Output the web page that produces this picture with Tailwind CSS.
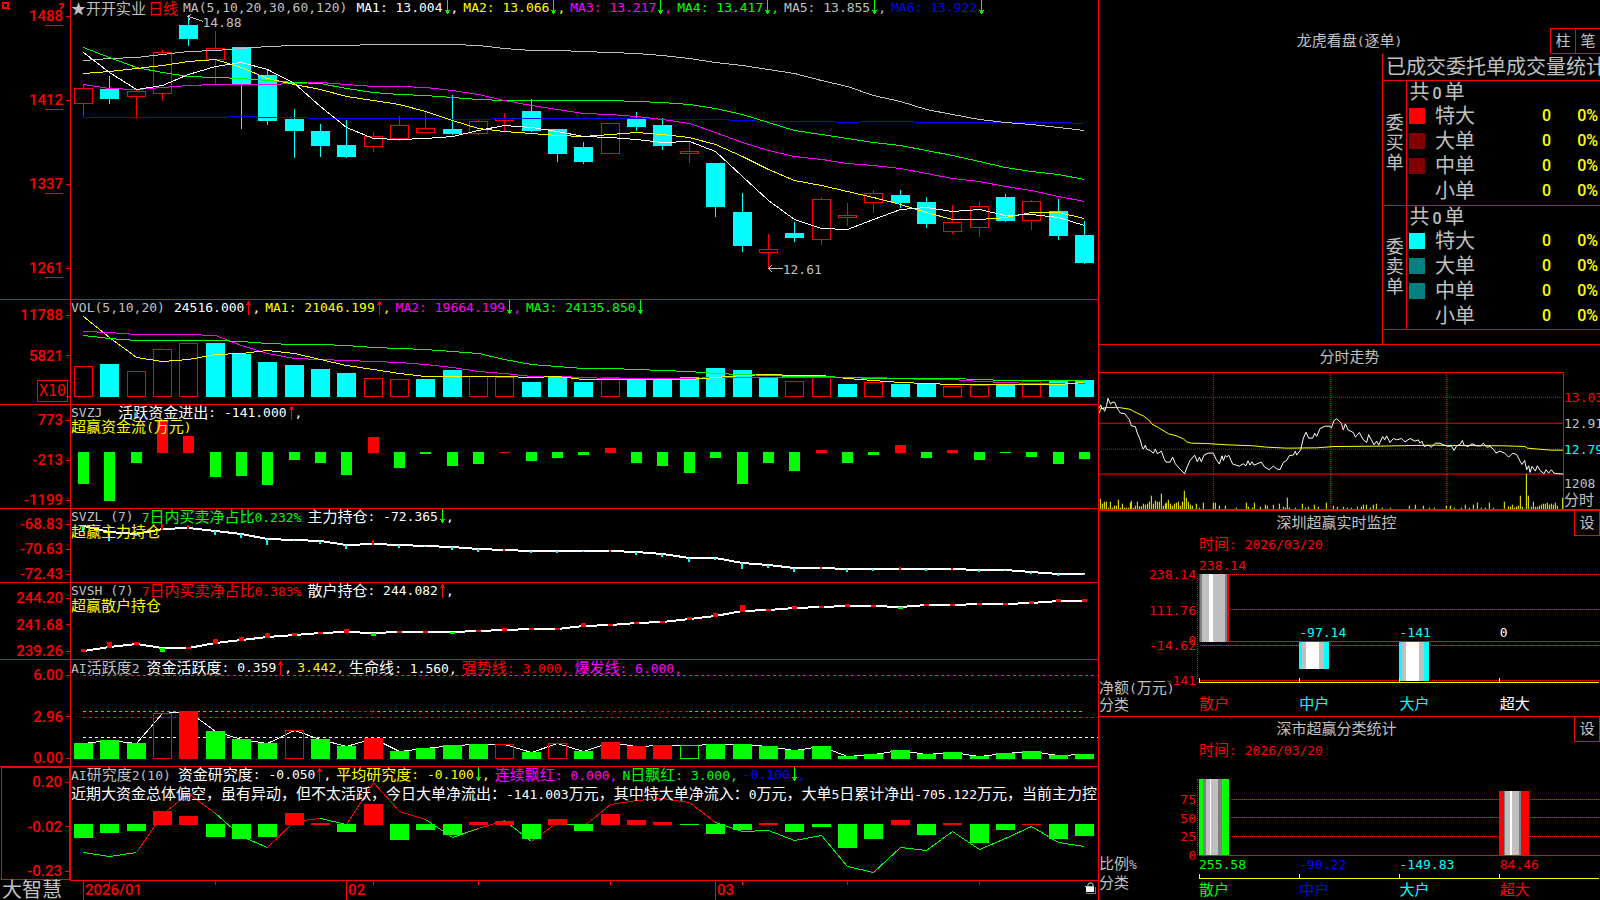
<!DOCTYPE html>
<html lang="zh-CN">
<head>
    <meta charset="UTF-8">
    <meta name="viewport" content="width=device-width, initial-scale=1.0">
    <title>大智慧 - 开开实业 日线</title>
    <script src="https://cdn.jsdelivr.net/npm/@tailwindcss/browser@4"></script>
    <style>
        svg.chart * { shape-rendering: crispEdges; vector-effect: non-scaling-stroke; }
    </style>
</head>
<body class="bg-black text-[#c0c0c0] text-[13px] leading-4 font-['DejaVu_Sans_Mono','Noto_Sans_CJK_SC',monospace]">

<!-- 箭头图标 -->
<svg class="hidden">
    <symbol id="down" viewBox="0 0 8 15"><path d="M4.5 0V14M2 10.5h1.5v1.5h2v-1.500h1.500" fill="none" stroke="#00ff00"/><path d="M3 11h3v2H3z" fill="#00ff00"/></symbol>
    <symbol id="up" viewBox="0 0 8 15"><path d="M4.500 1V15M2 4.500h1.500V3h2v1.500h1.500" fill="none" stroke="#ff0000"/><path d="M3 2h3v2H3z" fill="#ff0000"/></symbol>
</svg>

<main class="flex h-screen overflow-hidden whitespace-nowrap">

    <!-- 左侧：K线与指标 -->
    <div class="grid min-w-0 flex-1 grid-rows-[300fr_105fr_104fr_74fr_77fr_107fr_114fr_19fr]">

        <!-- K线 -->
        <section class="flex min-h-0 border-b border-[#ff0000]">
            <div class="relative w-[71px] shrink-0 border-r border-[#ff0000]">
                <svg class="absolute left-[2px] top-[2px] h-2 w-2" viewBox="0 0 8 8"><path d="M1 1h5v5H1zM6 6l2 2" fill="none" stroke="#ff0000" stroke-width="2"/></svg>
                <span class="absolute right-[5px] top-0 font-bold text-[#ff0000]">?</span>
                <ul class="flex h-full flex-col justify-between pb-[23px] pt-2 text-[#ff0000] font-['Roboto'] text-[15px] font-medium" data-axis="1488,1412,1337,1261" data-underline="1"></ul>
            </div>
            <div class="relative min-w-0 flex-1 overflow-hidden">
                <svg id="kline" class="chart absolute inset-0 h-full w-full" viewBox="71 0 1027 299" preserveAspectRatio="none"></svg>
                <div class="relative flex gap-[5px]">
                    <span class="text-[15px] font-['Noto_Sans_CJK_SC',sans-serif]">★开开实业<span class="ml-[2px] text-[#ff0000]">日线</span></span>
                    <span class="mr-1">MA(5,10,20,30,60,120)</span>
                    <span class="flex text-white">MA1: 13.004<svg class="h-[15px] w-2"><use href="#down"/></svg>,</span>
                    <span class="flex text-[#ffff00]">MA2: 13.066<svg class="h-[15px] w-2"><use href="#down"/></svg>,</span>
                    <span class="flex text-[#ff00ff]">MA3: 13.217<svg class="h-[15px] w-2"><use href="#down"/></svg>,</span>
                    <span class="flex text-[#00ff00]">MA4: 13.417<svg class="h-[15px] w-2"><use href="#down"/></svg>,</span>
                    <span class="flex">MA5: 13.855<svg class="h-[15px] w-2"><use href="#down"/></svg>,</span>
                    <span class="flex text-[#0000ff]">MA6: 13.922<svg class="h-[15px] w-2"><use href="#down"/></svg></span>
                </div>
                <span class="absolute left-[12.8%] top-[5%]">14.88</span>
                <span class="absolute left-[69.3%] top-[87.5%]">12.61</span>
            </div>
        </section>

        <!-- 成交量 -->
        <section class="flex min-h-0 border-b border-[#ff0000]">
            <div class="relative w-[71px] shrink-0 border-r border-[#ff0000]">
                <ul class="flex h-full flex-col justify-between pt-[7px] text-[#ff0000] font-['Roboto'] text-[15px] font-medium" data-axis="11788,5821,"></ul>
                <span class="absolute bottom-[2px] right-[2px] h-[22px] w-[31px] border border-[#ff0000] text-center text-[15px] leading-5 text-[#ff0000]">X10</span>
            </div>
            <div class="relative min-w-0 flex-1 overflow-hidden">
                <svg id="vol" class="chart absolute inset-0 h-full w-full" viewBox="71 300 1027 104" preserveAspectRatio="none"></svg>
                <div class="relative flex gap-[5px]">
                    <span class="mr-1">VOL(5,10,20)</span>
                    <span class="flex text-white">24516.000<svg class="h-[15px] w-2"><use href="#up"/></svg>,</span>
                    <span class="flex text-[#ffff00]">MA1: 21046.199<svg class="h-[15px] w-2"><use href="#up"/></svg>,</span>
                    <span class="flex text-[#ff00ff]">MA2: 19664.199<svg class="h-[15px] w-2"><use href="#down"/></svg>,</span>
                    <span class="flex text-[#00ff00]">MA3: 24135.850<svg class="h-[15px] w-2"><use href="#down"/></svg></span>
                </div>
            </div>
        </section>

        <!-- 资金流 -->
        <section class="flex min-h-0 border-b border-[#ff0000]">
            <ul class="flex w-[71px] shrink-0 flex-col justify-between border-r border-[#ff0000] pt-[7px] text-[#ff0000] font-['Roboto'] text-[15px] font-medium" data-axis="773,-213,-1199"></ul>
            <div class="relative min-w-0 flex-1 overflow-hidden">
                <svg id="svzj" class="chart absolute inset-0 h-full w-full" viewBox="71 405 1027 103" preserveAspectRatio="none"></svg>
                <div class="relative flex gap-4">
                    <span>SVZJ</span>
                    <span class="flex text-white"><span class="text-[15px]">活跃资金进出</span>: -141.000<svg class="h-[15px] w-2"><use href="#up"/></svg>,</span>
                </div>
                <p class="relative text-[15px] leading-3 text-[#ffff00]">超赢资金流<span class="text-[13px]">(</span>万元<span class="text-[13px]">)</span></p>
            </div>
        </section>

        <!-- 主力持仓 -->
        <section class="flex min-h-0 border-b border-[#ff0000]">
            <ul class="flex w-[71px] shrink-0 flex-col justify-between border-r border-[#ff0000] pt-[7px] text-[#ff0000] font-['Roboto'] text-[15px] font-medium" data-axis="-68.83,-70.63,-72.43"></ul>
            <div class="relative min-w-0 flex-1 overflow-hidden">
                <svg id="svzl" class="chart absolute inset-0 h-full w-full" viewBox="71 509 1027 73" preserveAspectRatio="none"></svg>
                <div class="relative flex gap-[6px]">
                    <span class="mr-[2px]">SVZL (7)</span>
                    <span class="text-[#00ff00]">7<span class="text-[15px]">日内买卖净占比</span>0.232%</span>
                    <span class="flex text-white"><span class="text-[15px]">主力持仓</span>: -72.365<svg class="h-[15px] w-2"><use href="#down"/></svg>,</span>
                </div>
                <p class="relative text-[15px] leading-3 text-[#ffff00]">超赢主力持仓</p>
            </div>
        </section>

        <!-- 散户持仓 -->
        <section class="flex min-h-0 border-b border-[#ff0000]">
            <ul class="flex w-[71px] shrink-0 flex-col justify-between border-r border-[#ff0000] pt-[7px] text-[#ff0000] font-['Roboto'] text-[15px] font-medium" data-axis="244.20,241.68,239.26"></ul>
            <div class="relative min-w-0 flex-1 overflow-hidden">
                <svg id="svsh" class="chart absolute inset-0 h-full w-full" viewBox="71 583 1027 76" preserveAspectRatio="none"></svg>
                <div class="relative flex gap-[6px]">
                    <span class="mr-[2px]">SVSH (7)</span>
                    <span class="text-[#ff0000]">7<span class="text-[15px]">日内买卖净占比</span>0.383%</span>
                    <span class="flex text-white"><span class="text-[15px]">散户持仓</span>: 244.082<svg class="h-[15px] w-2"><use href="#up"/></svg>,</span>
                </div>
                <p class="relative text-[15px] leading-3 text-[#ffff00]">超赢散户持仓</p>
            </div>
        </section>

        <!-- AI活跃度 -->
        <section class="flex min-h-0 border-b border-[#ff0000]">
            <ul class="flex w-[71px] shrink-0 flex-col justify-between border-r border-[#ff0000] pt-[7px] text-[#ff0000] font-['Roboto'] text-[15px] font-medium" data-axis="6.00,2.96,0.00"></ul>
            <div class="relative min-w-0 flex-1 overflow-hidden">
                <svg id="active" class="chart absolute inset-0 h-full w-full" viewBox="71 660 1027 106" preserveAspectRatio="none"></svg>
                <div class="relative flex gap-[5px]">
                    <span class="mr-[2px]">AI<span class="text-[15px]">活跃度</span>2</span>
                    <span class="flex text-white"><span class="text-[15px]">资金活跃度</span>: 0.359<svg class="h-[15px] w-2"><use href="#up"/></svg>,</span>
                    <span class="text-[#ffff00]">3.442,</span>
                    <span class="text-white"><span class="text-[15px]">生命线</span>: 1.560,</span>
                    <span class="text-[#ff0000]"><span class="text-[15px]">强势线</span>: 3.000,</span>
                    <span class="text-[#ff00ff]"><span class="text-[15px]">爆发线</span>: 6.000,</span>
                </div>
            </div>
        </section>

        <!-- AI研究度 -->
        <section class="flex min-h-0">
            <div class="w-[71px] shrink-0 border-r border-[#ff0000] pb-[1px] pl-[1px]">
                <ul class="flex h-full flex-col justify-between border border-[#ff0000] pt-[6px] text-[#ff0000] font-['Roboto'] text-[15px] font-medium" data-axis="0.20,-0.02,-0.23"></ul>
            </div>
            <div class="relative min-w-0 flex-1 overflow-hidden border-b border-[#ff0000]">
                <svg id="research" class="chart absolute inset-0 h-full w-full" viewBox="71 767 1027 113" preserveAspectRatio="none"></svg>
                <div class="relative flex gap-[5px]">
                    <span class="mr-[2px]">AI<span class="text-[15px]">研究度</span>2(10)</span>
                    <span class="flex text-white"><span class="text-[15px]">资金研究度</span>: -0.050<svg class="h-[15px] w-2"><use href="#up"/></svg>,</span>
                    <span class="flex text-[#ffff00]"><span class="text-[15px]">平均研究度</span>: -0.100<svg class="h-[15px] w-2"><use href="#down"/></svg>,</span>
                    <span class="text-[#ff00ff]"><span class="text-[15px]">连续飘红</span>: 0.000,</span>
                    <span class="text-[#00ff00]">N<span class="text-[15px]">日飘红</span>: 3.000,</span>
                    <span class="flex text-[#0000ff]">-0.100<svg class="h-[15px] w-2"><use href="#down"/></svg>,</span>
                </div>
                <p class="relative mt-[2px] text-[15px] text-white">近期大资金总体偏空，虽有异动，但不太活跃，今日大单净流出：<span class="text-[13px]">-141.003</span>万元，其中特大单净流入：<span class="text-[13px]">0</span>万元，大单<span class="text-[13px]">5</span>日累计净出<span class="text-[13px]">-705.122</span>万元，当前主力控</p>
            </div>
        </section>

        <!-- 时间轴 -->
        <footer class="flex min-h-0">
            <span class="w-[71px] shrink-0 pl-[2px] text-[20px] leading-[19px]">大智慧</span>
            <div class="relative min-w-0 flex-1">
                <svg id="ticks" class="chart absolute inset-0 h-full w-full" viewBox="71 881 1027 19" preserveAspectRatio="none"></svg>
                <div class="ml-3 grid h-full grid-cols-[263fr_369fr_383fr] font-['Roboto'] text-[15px] font-medium leading-[19px] text-[#ff0000]">
                    <span class="border-l border-[#ff0000] pl-[1px]">2026/01</span>
                    <span class="border-l border-[#ff0000] pl-[1px]">02</span>
                    <span class="flex justify-between border-l border-[#ff0000] pl-[1px] pr-[2px]">03
                        <svg class="mt-[1px] h-3 w-[11px]" viewBox="0 0 11 12"><path d="M3 5V2h1V1h3v1h1v3" fill="none" stroke="#c0c0c0"/><path d="M1 11.500h9.500V5" fill="none" stroke="#808080"/><path d="M1 5h8v5H1z" fill="#fff"/><path d="M0 4h9v1H0z" fill="#c0c0c0"/></svg>
                    </span>
                </div>
            </div>
        </footer>
    </div>

    <!-- 右侧 -->
    <aside class="grid w-[502px] shrink-0 grid-rows-[345fr_166fr_206fr_183fr] overflow-hidden border-l border-[#ff0000]">

        <!-- 龙虎看盘 -->
        <section class="flex min-h-0 flex-col border-b border-[#ff0000]">
            <header class="mt-7 grid h-[26px] shrink-0 grid-cols-[1fr_auto_1fr] items-center text-[15px]">
                <h2 class="col-start-2">龙虎看盘<span class="text-[13px]">(</span>逐单<span class="text-[13px]">)</span></h2>
                <div class="-mr-[1px] flex h-full justify-end">
                    <button class="w-[26px] border border-[#ff0000]">柱</button>
                    <button class="-ml-[1px] w-[26px] border border-[#ff0000]">笔</button>
                </div>
            </header>
            <div class="ml-auto min-h-0 w-[218px] flex-1 overflow-hidden border-l border-[#ff0000] pl-[1px] text-[20px]">
                <h3 class="pl-[2px] leading-[26px]">已成交委托单成交量统计</h3>
                <table class="w-full table-fixed border-collapse leading-[22px]">
                    <colgroup><col class="w-[22px]"><col class="w-[28px]"><col class="w-[60px]"><col><col class="w-[49px]"></colgroup>
                    <tbody id="buy" class="border-y border-[#ff0000]"></tbody>
                    <tbody id="sell" class="border-y border-[#ff0000]"></tbody>
                </table>
            </div>
        </section>

        <!-- 分时走势 -->
        <section class="flex min-h-0 flex-col border-b-2 border-[#ff0000]">
            <h2 class="h-[27px] shrink-0 pt-1 text-center text-[15px]">分时走势</h2>
            <div class="flex min-h-0 flex-1">
                <div class="relative flex-1 border-r border-t border-[#ff0000]">
                    <svg id="intraday" class="chart absolute inset-0 h-full w-full" viewBox="27 99 1392 409" preserveAspectRatio="none"></svg>
                </div>
                <div class="flex w-9 flex-col overflow-hidden pt-[18px]">
                    <span class="mb-[10px] text-[#ff0000]">13.03</span>
                    <span class="mb-[10px]">12.91</span>
                    <span class="mb-[18px] text-[#00ffff]">12.79</span>
                    <span>1208</span>
                    <span class="text-[15px]">分时</span>
                </div>
            </div>
        </section>

        <!-- 实时监控 -->
        <section class="flex min-h-0 flex-col border-b border-[#ff0000]">
            <header class="flex h-6 shrink-0 text-center text-[15px] leading-6">
                <h2 class="flex-1">深圳超赢实时监控</h2>
                <button class="h-[25px] w-[26px] border-x border-b border-[#ff0000]">设</button>
            </header>
            <p class="pl-[100px] leading-[18px] text-[#ff0000]"><span class="text-[15px]">时间</span>: 2026/03/20</p>
            <div class="flex min-h-0 flex-1">
                <div id="netAxis" class="relative flex w-[100px] flex-col justify-end pb-[3px] text-[15px]">
                    <span>净额<span class="text-[13px]">(</span>万元<span class="text-[13px]">)</span></span>
                    <span>分类</span>
                </div>
                <div class="flex flex-1 flex-col">
                    <div id="netPlot" class="relative flex-1">
                        <svg id="net" class="chart absolute inset-0 h-full w-full" viewBox="327 144 1203 393" preserveAspectRatio="none"></svg>
                    </div>
                    <div class="grid h-8 grid-cols-4 pt-3 text-[15px]">
                        <span class="text-[#ff0000]">散户</span><span class="text-[#00ffff]">中户</span><span class="text-[#00ffff]">大户</span><span class="text-white">超大</span>
                    </div>
                </div>
            </div>
        </section>

        <!-- 分类统计 -->
        <section class="flex min-h-0 flex-col">
            <header class="flex h-6 shrink-0 text-center text-[15px] leading-6">
                <h2 class="flex-1">深市超赢分类统计</h2>
                <button class="h-[25px] w-[26px] border-x border-b border-[#ff0000]">设</button>
            </header>
            <p class="pl-[100px] leading-[18px] text-[#ff0000]"><span class="text-[15px]">时间</span>: 2026/03/20</p>
            <div class="flex min-h-0 flex-1">
                <div id="ratioAxis" class="relative flex w-[100px] flex-col justify-end pb-2 text-[15px] leading-[18px]">
                    <span>比例<span class="text-[13px]">%</span></span>
                    <span>分类</span>
                </div>
                <div class="flex flex-1 flex-col">
                    <div id="ratioPlot" class="relative flex-1">
                        <svg id="ratio" class="chart absolute inset-0 h-full w-full" viewBox="327 762 1203 369" preserveAspectRatio="none"></svg>
                    </div>
                    <div class="grid h-[18px] grid-cols-4 text-[15px]">
                        <span class="text-[#00ff00]">散户</span><span class="text-[#0000ff]">中户</span><span class="text-[#00ffff]">大户</span><span class="text-[#ff0000]">超大</span>
                    </div>
                </div>
            </div>
        </section>
    </aside>
</main>

<script>
    const RED = '#ff0000', CYAN = '#00ffff', GREEN = '#00ff00', YELLOW = '#ffff00', MAGENTA = '#ff00ff', SILVER = '#c0c0c0', BLUE = '#0000ff', WHITE = '#ffffff', GRAY = '#808080';
    const $ = id => document.getElementById(id);
    const N = 39;
    const cx = i => Math.floor(83.5 + 26.34 * i);

    const rect = (x, y, w, h, c) => `<rect x="${x}" y="${y}" width="${w}" height="${h}" fill="${c}"/>`;
    const box = (x, y, w, h, c) => `<rect x="${x + .5}" y="${y + .5}" width="${w - 1}" height="${h - 1}" fill="none" stroke="${c}"/>`;
    const hline = (x1, x2, y, c, extra = '') => `<path d="M${x1} ${y}H${x2}" stroke="${c}" ${extra}/>`;
    const vline = (x, y1, y2, c, extra = '') => `<path d="M${x} ${y1}V${y2}" stroke="${c}" ${extra}/>`;
    const poly = (pts, c, w = 1) => `<polyline points="${pts}" fill="none" stroke="${c}" stroke-width="${w}"/>`;
    const series = (ys, c, w = 1) => poly(ys.map((y, i) => `${cx(i) + .5},${w > 1 ? y : y + .5}`).join(' '), c, w);

    // 坐标轴刻度
    document.querySelectorAll('[data-axis]').forEach(ul => {
        const cls = ul.dataset.underline ? 'absolute right-0 top-[17px] h-px w-[18px] bg-[#ff0000]' : 'hidden';
        ul.innerHTML = ul.dataset.axis.split(',').map(t =>
            `<li class="flex h-4 items-center justify-end gap-[3px]"><span class="relative">${t}<i class="${cls}"></i></span><i class="h-px w-1 bg-[#ff0000]"></i></li>`).join('');
    });

    // K线: [颜色, 实体上, 实体下, 最高, 最低]
    const K = [
        ['r',88,104,84,117],['c',89,99,76,104],['r',91,97,89,119],['r',52,94,50,101],['c',25,39,16,46],
        ['r',48,60,31,84],['c',47,84,47,129],['c',75,121,70,125],['c',119,131,109,158],['c',131,146,124,157],
        ['c',145,157,120,158],['r',136,147,132,152],['r',125,139,116,141],['r',128,133,111,133],['c',129,134,95,135],
        ['r',121,134,120,135],['r',118,121,113,131],['c',111,131,99,132],['c',129,154,129,162],['c',147,162,142,164],
        ['r',123,154,123,154],['c',119,127,112,131],['c',125,146,118,150],['r',151,154,141,163],['c',163,207,163,217],
        ['c',212,246,193,252],['r',249,253,234,268],['c',233,238,222,242],['r',199,240,197,245],['r',215,218,203,226],
        ['r',193,203,190,213],['c',195,203,190,208],['c',202,224,197,228],['r',222,232,205,234],['r',206,228,201,237],
        ['c',197,221,194,222],['r',201,221,200,230],['c',211,236,199,240],['c',235,263,221,264]
    ];
    const MA = [
        [[117,117,117,117,117,117,116,117,117,118,118,118,118,118,119,119,118,118,118,118,118,118,119,119,119,120,121,121,121,122,121,121,122,122,122,122,122,122,123], BLUE],
        [[60,58,57,54,51,50,48,46,45,45,45,44,44,44,44,45,48,50,50,51,52,53,55,58,62,65,69,73,80,86,95,101,109,114,119,122,124,127,130], SILVER],
        [[47,57,67,72,76,77,78,80,82,83,88,92,94,95,97,99,100,100,100,100,100,101,102,104,108,114,122,130,134,138,142,145,150,155,161,167,171,174,179], GREEN],
        [[84,88,89,87,85,84,84,84,83,82,84,86,86,87,90,94,100,105,109,113,114,116,119,123,132,142,150,156,159,163,165,168,173,178,181,186,190,196,201], MAGENTA],
        [[73,71,68,65,61,59,67,78,84,89,96,100,104,111,120,128,131,133,135,136,134,132,134,137,144,156,169,180,185,191,197,204,212,219,219,217,212,212,218], YELLOW],
        [[52,72,89,85,74,66,62,69,83,106,127,138,139,138,136,130,125,127,131,136,137,139,142,141,151,176,200,219,228,229,219,209,207,211,209,215,214,217,225], WHITE]
    ];
    $('kline').innerHTML = K.map(([t, a, b, h, l], i) => {
        const x = cx(i), c = t === 'r' ? RED : CYAN;
        return t === 'r'
            ? vline(x + .5, h, a, c) + vline(x + .5, b, l, c) + box(x - 9, a, 19, b - a, c)
            : vline(x + .5, h, l, c) + rect(x - 9, a, 19, b - a, c);
    }).join('') + MA.map(([ys, c]) => series(ys, c)).join('')
        + poly('203,21.500 198,19.500 188,16.500', SILVER) + poly('191,14 188,16.500 190,20', SILVER)
        + hline(769, 783, 268.5, SILVER) + poly('772,265 768.5,268.5 772,272', SILVER);

    // 成交量
    const volTop = [366,364,371,349,343,343,354,362,365,369,373,378,379,379,370,376,377,382,377,382,377,379,379,377,368,370,378,381,377,384,382,384,384,386,385,385,381,381,380];
    const volType = 'rcrrrccccccrrccrrcccrcccccc' + 'rrcrccrrcrcc';
    $('vol').innerHTML = volTop.map((y, i) => volType[i] === 'r' ? box(cx(i) - 9, y, 19, 397 - y, RED) : rect(cx(i) - 9, y, 19, 397 - y, CYAN)).join('')
        + series([331,332,334,334,334,335,345,353,358,359,360,361,362,364,367,371,373,376,376,377,378,378,378,378,377,377,377,377,377,377,377,378,379,379,381,382,383,383,383], MAGENTA)
        + series([316,337,357,361,359,354,353,350,353,359,365,369,373,376,376,376,376,377,376,379,379,379,379,379,377,375,374,375,375,378,380,382,383,384,384,384,384,384,382], YELLOW)
        + series([335,338,340,340,340,340,341,343,344,344,345,347,348,349,351,353,359,364,366,368,368,369,370,371,373,374,375,376,376,377,378,378,378,378,379,380,380,380,380], GREEN);

    // 资金流柱
    const flow = [484,501,463,420,436,477,476,485,460,463,475,437,468,454,466,464,452,461,458,455,448,463,466,473,458,484,463,471,450,463,455,445,458,450,460,453,457,464,459];
    $('svzj').innerHTML = flow.map((y, i) => y <= 452 ? rect(cx(i) - 5, y, 11, 453 - y, RED) : rect(cx(i) - 5, 452, 11, y - 452, GREEN)).join('');

    // 持仓曲线, 正值向上, 负值向下
    const hold = (ys, ticks, w, down) => series(ys, WHITE, 2) + ticks.map((t, i) =>
        t > 0 ? rect(cx(i) - (w >> 1), ys[i] - t, w, t + 1, RED) : rect(cx(i) - (w >> 1), ys[i], w, -t, down)).join('');
    $('svzl').innerHTML = hold(
        [526,532,534,529,528,531,534,539,540,541,545,544,545,546,547,549,550,551,551,551,551,552,554,558,558,563,565,568,568,569,569,569,569,569,570,570,572,574,574],
        [-5,-9,-2,5,3,-4,-4,-6,-1,-3,-4,4,-3,-1,-3,-3,1,-2,-2,-1,1,-3,-3,-4,-2,-6,-3,-4,1,-3,-2,2,-2,1,-2,-1,-2,-2,-1], 2, CYAN);
    $('svsh').innerHTML = hold(
        [651,647,644,648,648,643,640,637,635,633,632,633,632,632,632,631,630,629,629,626,625,623,622,619,616,611,610,608,607,606,606,607,605,605,604,604,603,601,601],
        [2,5,2,-4,1,4,3,4,2,1,3,-3,1,1,-2,1,2,1,1,3,1,1,1,2,3,6,1,2,1,2,1,-2,1,1,1,1,2,2,2], 5, GREEN);

    // AI活跃度: 大写为空心
    const actTop = [743,740,743,713,711,731,739,743,730,739,746,738,751,748,745,744,744,752,743,751,742,746,745,745,744,744,746,750,746,756,754,750,754,752,756,753,751,755,754];
    const actType = 'gggRrgggRggrggggRgRgrrrGggggggggggggggg';
    const dash = 'stroke-dasharray="3 3"';
    $('active').innerHTML = hline(83, 1098, 675.5, MAGENTA, dash) + hline(83, 1085, 711.5, GREEN, dash) + hline(83, 1098, 717.5, RED, dash) + hline(83, 1098, 737.5, WHITE, dash)
        + rect(cx(10), 711, 27, 1, '#000') + hline(cx(10), cx(11), 711.5, RED, dash)
        + rect(cx(19), 711, 105, 1, '#000') + hline(cx(19), cx(23), 711.5, RED, dash)
        + series(actTop, WHITE)
        + actTop.map((y, i) => {
            const t = actType[i], c = t.toLowerCase() === 'r' ? RED : GREEN;
            return (t === 'R' || t === 'G' ? box : rect)(cx(i) - 9, y, 19, 759 - y, c);
        }).join('');

    // AI研究度
    const resBar = [838,833,831,811,816,837,839,837,813,823,832,804,840,830,835,822,821,839,819,831,814,820,822,825,834,830,823,832,827,848,839,820,835,823,843,830,824,839,836];
    const resLine = [852,856,852,814,793,813,836,847,821,818,824,782,811,819,837,828,820,841,822,826,804,800,798,802,822,831,830,840,835,866,872,847,850,831,849,838,826,842,846];
    const redSeg = [2, 3, 4, 7, 8, 10, 11, 12, 15, 17, 19, 20, 21, 22, 23];
    let lines = '';
    for (let i = 0; i < N - 1; i++) {
        lines += poly(`${cx(i) + .5},${resLine[i] + .5} ${cx(i + 1) + .5},${resLine[i + 1] + .5}`, redSeg.includes(i) ? RED : GREEN);
    }
    $('research').innerHTML = lines + resBar.map((y, i) => y <= 824 ? rect(cx(i) - 9, y, 19, 825 - y, RED) : rect(cx(i) - 9, 824, 19, y - 824, GREEN)).join('');

    $('ticks').innerHTML = [1, 5, 11, 15, 20, 25, 29, 34].map(i => vline(cx(i) + .5, 881, 885, RED)).join('');

    // 委托单统计表
    const orders = (id, name, colors) => {
        const num = "p-0 align-top text-right font-['Roboto'] text-[16px] font-medium text-[#ffff00]";
        $(id).innerHTML = `<tr class="h-6"><th rowspan="5" class="border-r border-[#ff0000] p-0 text-[18px] font-normal leading-5 whitespace-normal">${name}</th>
            <td colspan="4" class="p-0 pl-[3px] align-top">共<span class="mx-[3px] font-['Roboto'] text-[16px] font-medium">0</span>单</td></tr>`
            + ['特大', '大单', '中单', '小单'].map((n, i) => `<tr class="h-[25px]">
                <td class="p-0 pl-[2px] pt-[3px] align-top"><i class="block h-4 w-4" style="background:${colors[i]}"></i></td>
                <td class="p-0 pl-[1px] align-top">${n}</td>
                <td class="${num}">0</td>
                <td class="${num} pr-[2px]">0%</td></tr>`).join('');
    };
    orders('buy', '委买单', ['#ff0000', '#800000', '#800000', '#000000']);
    orders('sell', '委卖单', ['#00ffff', '#008080', '#008080', '#000000']);

    // 分时
    const price = '28,205 32,195 36,207 40,205 44,214 50,196 54,175 58,185 62,193 66,187 74,187 80,202 86,212 92,220 104,221 112,232 118,238 124,258 136,260 142,280 150,298 156,320 160,328 166,316 170,328 182,333 190,340 196,328 202,342 214,334 222,356 228,367 240,367 248,352 256,372 270,388 284,402 290,385 300,362 314,346 322,366 328,352 334,366 342,346 354,340 370,340 378,358 388,373 396,348 400,362 406,347 410,352 416,346 428,373 448,379 460,372 468,378 474,363 480,376 486,366 492,376 514,367 524,382 538,390 550,379 560,387 570,390 580,368 590,362 598,347 610,346 616,334 620,346 632,330 640,295 648,277 656,295 668,295 674,280 680,290 690,266 706,259 720,259 724,265 732,242 740,237 748,244 754,250 760,270 766,252 774,270 790,278 796,292 808,278 820,300 830,308 836,284 844,300 852,315 860,304 866,316 878,290 884,300 890,288 900,308 910,296 920,300 935,296 945,306 960,296 975,304 985,300 990,310 996,304 1002,320 1014,316 1024,322 1036,310 1050,310 1062,316 1076,320 1084,318 1092,332 1100,318 1110,314 1117,302 1122,316 1134,320 1146,312 1160,318 1172,318 1180,310 1190,322 1200,320 1210,328 1218,340 1230,334 1244,340 1256,352 1268,340 1280,344 1290,364 1296,374 1304,362 1310,390 1316,378 1320,398 1326,380 1336,394 1342,378 1350,392 1362,402 1368,390 1376,400 1384,390 1392,400 1404,402 1419,403';
    const avg = '28,220 32,206 50,203 88,203 120,208 130,214 160,228 176,240 186,253 205,263 236,282 260,288 280,297 290,306 304,310 350,311 410,315 490,318 530,322 590,325 680,324 735,320 870,319 1030,316 1100,317 1240,318 1305,320 1312,325 1345,328 1385,331 1419,331';
    const minuteVol = '31,477 37,492 43,486 49,486 55,504 61,486 67,504 73,498 79,498 85,480 91,504 97,492 103,504 109,504 115,504 121,489 124,483 130,504 136,498 142,486 148,500 154,500 160,492 166,495 172,492 178,486 184,468 190,492 196,483 202,486 208,486 214,462 220,498 226,492 229,489 235,480 241,492 247,498 253,492 259,489 265,486 271,498 277,486 283,453 289,474 295,486 301,495 307,498 319,492 328,504 340,489 370,489 376,489 388,498 406,498 439,504 469,489 475,501 487,504 493,489 511,501 526,495 532,498 550,495 568,492 580,501 586,504 592,474 598,504 616,504 637,492 646,504 655,501 673,495 685,501 709,489 730,498 742,501 760,501 772,504 784,504 802,501 814,501 820,495 829,495 841,504 850,495 859,492 877,504 901,504 958,498 976,495 1000,498 1018,504 1033,504 1069,498 1081,498 1093,504 1114,504 1126,495 1138,504 1150,495 1162,489 1174,504 1186,504 1198,489 1210,504 1243,486 1255,500 1261,501 1267,495 1273,504 1279,501 1285,498 1291,468 1297,501 1309,402 1315,468 1324,501 1330,486 1336,501 1342,501 1348,498 1354,495 1360,492 1366,492 1372,489 1378,495 1384,492 1390,495 1396,489 1402,498 1418,474';
    const dot = 'stroke-dasharray="1 1"';
    $('intraday').innerHTML = hline(27, 1420, 172, RED, dot) + hline(27, 1420, 250, RED) + hline(27, 1420, 328, RED, dot) + hline(27, 1420, 403, RED)
        + [370, 721, 1069].map(x => vline(x, 99, 508, RED, dot)).join('')
        + minuteVol.split(' ').map(p => p.split(',')).map(([x, y]) => vline(x, y, 508, YELLOW)).join('')
        + poly(avg, YELLOW) + poly(price, WHITE);

    // 柱形图: 由竖条拼出的圆柱
    const cylinder = (x, y, h, stops) => stops.map(([a, b, c]) => rect(x + a, y, b - a, h, c)).join('');
    const base = (y, tick) => hline(327, 1527, y, YELLOW) + [328, 628, 928, 1228].map(x => vline(x, y - tick, y, YELLOW)).join('');
    const cyanBar = [[0, 9, CYAN], [9, 21, SILVER], [21, 60, WHITE], [60, 75, SILVER], [75, 90, CYAN]];
    $('net').innerHTML = [205, 313, 421, 526].map(y => hline(330, 1530, y, RED, dot)).join('') + hline(327, 1530, 409, RED)
        + cylinder(327, 204, 205, [[0, 3, RED], [3, 9, GRAY], [9, 30, SILVER], [30, 42, WHITE], [42, 78, SILVER], [78, 84, GRAY], [84, 90, RED]])
        + cylinder(627, 411, 81, cyanBar) + cylinder(927, 411, 117, cyanBar) + base(532, 13);
    $('ratio').innerHTML = [880, 937, 994].map(y => hline(330, 1530, y, RED, dot)).join('') + hline(327, 1530, 1051, RED)
        + cylinder(327, 819, 231, [[0, 12, GREEN], [12, 21, GRAY], [21, 33, SILVER], [33, 36, WHITE], [36, 57, SILVER], [57, 69, GRAY], [69, 90, GREEN]])
        + cylinder(1227, 855, 195, [[0, 15, RED], [15, 18, GRAY], [18, 33, SILVER], [33, 39, WHITE], [39, 60, SILVER], [60, 66, GRAY], [66, 90, RED]])
        + base(1120, 13);

    // 图上的数值, 位置由数据换算为百分比
    const place = (id, items, top, height) => {
        $(id).insertAdjacentHTML('beforeend', items.map(([t, y, col, c]) =>
            `<span class="absolute -translate-y-1/2 text-[13px] leading-4" style="top:${(y - top) / height * 100}%;${col < 0 ? 'right:3px' : `left:${col * 25}%`};color:${c}">${t}</span>`).join(''));
    };
    const axisLine = (id, y1, y2, top, height) => $(id).insertAdjacentHTML('beforeend',
        `<i class="absolute right-[1px] border-l border-dotted border-[#ff0000]" style="top:${(y1 - top) / height * 100}%;height:${(y2 - y1) / height * 100}%"></i>`);
    place('netAxis', [['238.14', 574, -1, RED], ['111.76', 610, -1, RED], ['0', 641, -1, RED], ['-14.62', 646, -1, RED], ['-141', 681, -1, RED]], 553, 163);
    place('netPlot', [['238.14', 565, 0, RED], ['-97.14', 633, 1, CYAN], ['-141', 633, 2, CYAN], ['0', 633, 3, WHITE]], 553, 131);
    place('ratioAxis', [['75', 799, -1, RED], ['50', 818, -1, RED], ['25', 837, -1, RED], ['0', 856, -1, RED]], 759, 141);
    place('ratioPlot', [['255.58', 865, 0, GREEN], ['-90.22', 865, 1, BLUE], ['-149.83', 865, 2, CYAN], ['84.46', 865, 3, RED]], 759, 123);
    axisLine('netAxis', 573, 679, 553, 163);
    axisLine('ratioAxis', 778, 855, 759, 141);
</script>
</body>
</html>
